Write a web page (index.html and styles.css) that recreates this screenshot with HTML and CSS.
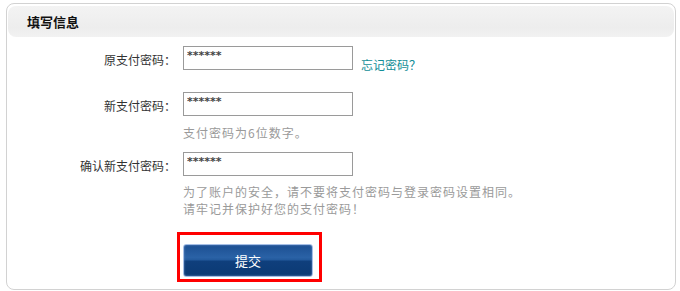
FILE: index.html
```html
<!DOCTYPE html>
<html lang="zh-CN">
<head>
    <meta charset="UTF-8">
    <meta name="viewport" content="width=device-width, initial-scale=1.0">
    <title>修改支付密码</title>
    <link rel="stylesheet" href="styles.css">
</head>
<body>
    <div class="panel">
        <div class="panel-head">
            <h2>填写信息</h2>
        </div>
        <div class="form">
            <div class="row">
                <label for="old-pwd">原支付密码：</label>
                <input type="text" id="old-pwd" value="******">
                <a href="#" class="forgot">忘记密码？</a>
            </div>
            <div class="row row-new">
                <label for="new-pwd">新支付密码：</label>
                <input type="text" id="new-pwd" value="******">
            </div>
            <p class="hint hint-short">支付密码为6位数字。</p>
            <div class="row row-confirm">
                <label for="confirm-pwd">确认新支付密码：</label>
                <input type="text" id="confirm-pwd" value="******">
            </div>
            <p class="hint hint-long">为了账户的安全，请不要将支付密码与登录密码设置相同。<br>请牢记并保护好您的支付密码！</p>
            <div class="submit-wrap">
                <button class="submit-button">提交</button>
            </div>
        </div>
    </div>
</body>
</html>
```

FILE: styles.css
```css
body {
    margin: 0;
    padding: 3px 0 0 6px;
    background-color: #ffffff;
    font-family: "Noto Sans CJK SC", "DejaVu Sans", sans-serif;
    font-size: 12px;
    color: #333;
}

.panel {
    width: 666px;
    border: 1px solid #d2d2d2;
    border-radius: 8px;
    padding: 2px 1px 7px 1px;
}

.panel-head {
    height: 31px;
    border-radius: 8px;
    background: linear-gradient(#f3f3f3, #ededed 70%, #f2f2f2);
    display: flex;
    align-items: center;
    padding-left: 19px;
}

.panel-head h2 {
    margin: 0;
    font-size: 13px;
    font-weight: bold;
    color: #111;
    line-height: 16px;
}

.form {
    padding-top: 9px;
}

.row {
    display: grid;
    grid-template-columns: 168px auto auto;
    column-gap: 7px;
    align-items: start;
    justify-content: start;
    margin: 0;
}

.row-new {
    margin-top: 20px;
}

.row-confirm {
    margin-top: 12px;
}

.row label {
    text-align: right;
    line-height: 14px;
    padding-top: 7px;
    color: #333;
}

.row input {
    width: 170px;
    height: 24px;
    box-sizing: border-box;
    border: 1px solid #9a9a9a;
    padding: 0 2px 6px 3px;
    font-family: "DejaVu Sans", sans-serif;
    font-size: 11px;
    font-weight: bold;
    color: #444;
    outline: none;
}

.forgot {
    color: #138e97;
    text-decoration: none;
    line-height: 14px;
    padding-top: 12px;
    margin-left: 1px;
}

.hint {
    margin: 10px 0 0 175px;
    line-height: 14px;
    letter-spacing: 1px;
    color: #9a9a9a;
}

.hint-long {
    margin-top: 7px;
    margin-bottom: 15px;
    line-height: 17px;
}

.submit-wrap {
    display: inline-block;
    margin-left: 169px;
    border: 3px solid #ff0000;
    padding: 9px 6px 2px 3px;
}

.submit-button {
    display: block;
    width: 130px;
    height: 33px;
    border: 1px solid #a6bfe6;
    border-radius: 3px;
    background: linear-gradient(#1c4f92 0%, #2a62a6 40%, #235a9d 48%, #0f3f7c 52%, #0b3a74 100%);
    box-shadow: inset 0 0 2px #6f95cf;
    color: #ffffff;
    font-family: "Noto Sans CJK SC", sans-serif;
    font-size: 13px;
    cursor: pointer;
}
```
